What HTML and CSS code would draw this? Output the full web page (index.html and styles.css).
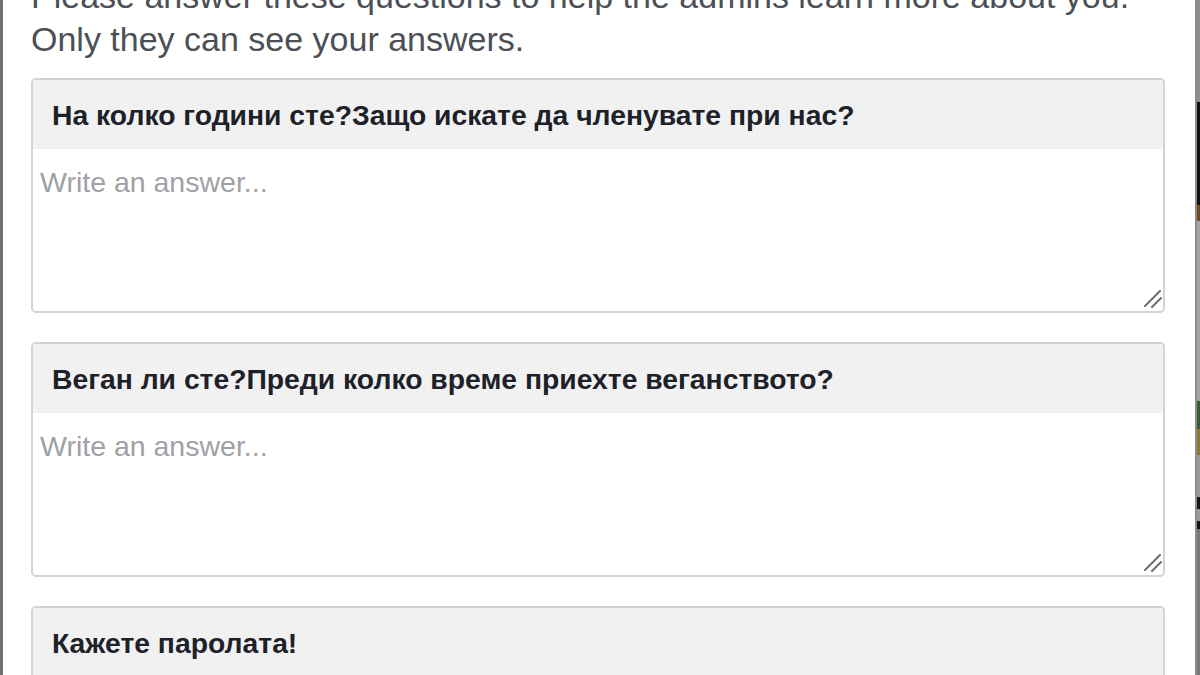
FILE: index.html
```html
<!DOCTYPE html>
<html lang="en">
<head>
<meta charset="utf-8">
<title>Membership questions</title>
<link rel="stylesheet" href="styles.css">
</head>
<body>
<div class="screen">
  <div class="dialog">
    <p class="intro">Please answer these questions to help the admins learn more about you. Only they can see your answers.</p>
    <div class="question">
      <div class="q-title">На колко години сте?Защо искате да членувате при нас?</div>
      <div class="q-field">
        <textarea class="q-answer" placeholder="Write an answer..."></textarea>
        <svg class="grip" width="18" height="18" viewBox="0 0 18 18" aria-hidden="true">
          <path d="M1 16 L16 1" />
          <path d="M8 17 L17 8" />
        </svg>
      </div>
    </div>
    <div class="question">
      <div class="q-title">Веган ли сте?Преди колко време приехте веганството?</div>
      <div class="q-field">
        <textarea class="q-answer" placeholder="Write an answer..."></textarea>
        <svg class="grip" width="18" height="18" viewBox="0 0 18 18" aria-hidden="true">
          <path d="M1 16 L16 1" />
          <path d="M8 17 L17 8" />
        </svg>
      </div>
    </div>
    <div class="question">
      <div class="q-title">Кажете паролата!</div>
      <div class="q-field">
        <textarea class="q-answer" placeholder="Write an answer..."></textarea>
      </div>
    </div>
  </div>
  <div class="backdrop">
    <span class="seg seg-gray"></span>
    <span class="seg seg-black"></span>
    <span class="seg seg-brown"></span>
    <span class="seg seg-light"></span>
    <span class="seg seg-green"></span>
    <span class="seg seg-olive"></span>
    <span class="seg seg-gray2"></span>
    <span class="seg seg-black2"></span>
    <span class="seg seg-gray3"></span>
    <span class="seg seg-black3"></span>
    <span class="seg seg-rest"></span>
  </div>
</div>
</body>
</html>
```
FILE: styles.css
```css
html, body {
  margin: 0;
  padding: 0;
  height: 100%;
  overflow: hidden;
  background: #fff;
}

.screen {
  display: flex;
  width: 1200px;
  height: 675px;
  overflow: hidden;
}

.dialog {
  flex: 0 0 1197px;
  box-sizing: border-box;
  border-left: 3px solid #707070;
  border-right: 2px solid #8c8c8c;
  background: #fff;
  padding: 0 30px 0 28px;
  font-family: "Liberation Sans", Arial, sans-serif;
}

.intro {
  margin: -25px 0 17px 0;
  font-size: 34px;
  line-height: 43px;
  color: #4b4f56;
}

.question {
  border: 2px solid #d0d3d8;
  border-radius: 5px;
  margin-bottom: 29px;
  overflow: hidden;
  display: flex;
  flex-direction: column;
}

.q-title {
  background: #f1f1f1;
  height: 69px;
  box-sizing: border-box;
  padding: 17px 19px 0 19px;
  font-size: 28.3px;
  line-height: 36px;
  font-weight: bold;
  color: #1d2129;
}

.q-field {
  position: relative;
}

.q-answer {
  display: block;
  width: 100%;
  height: 162px;
  box-sizing: border-box;
  border: 0;
  margin: 0;
  padding: 15px 7px;
  font-family: "Liberation Sans", Arial, sans-serif;
  font-size: 28.5px;
  line-height: 36px;
  color: #1d2129;
  background: #fff;
  resize: none;
  outline: none;
}

.q-answer::placeholder {
  color: #9ea1a6;
}

.grip {
  position: absolute;
  right: 1px;
  bottom: 3px;
  stroke: #6a6a6a;
  stroke-width: 2;
  stroke-linecap: round;
  stroke-dasharray: 3 1;
  fill: none;
}

.backdrop {
  flex: 0 0 3px;
  display: flex;
  flex-direction: column;
}

.seg { display: block; flex: 0 0 auto; }
.seg-gray { height: 102px; background: #8e8e8e; }
.seg-black { height: 103px; background: #111; }
.seg-brown { height: 16px; background: #6d4a22; }
.seg-light { height: 180px; background: #a4a4a4; }
.seg-green { height: 28px; background: #3b5a3a; }
.seg-olive { height: 26px; background: #8c7a34; }
.seg-gray2 { height: 42px; background: #9a9a9a; }
.seg-black2 { height: 12px; background: #151515; }
.seg-gray3 { height: 12px; background: #9a9a9a; }
.seg-black3 { height: 8px; background: #151515; }
.seg-rest { flex: 1 1 auto; background: #7a7a7a; }
```
